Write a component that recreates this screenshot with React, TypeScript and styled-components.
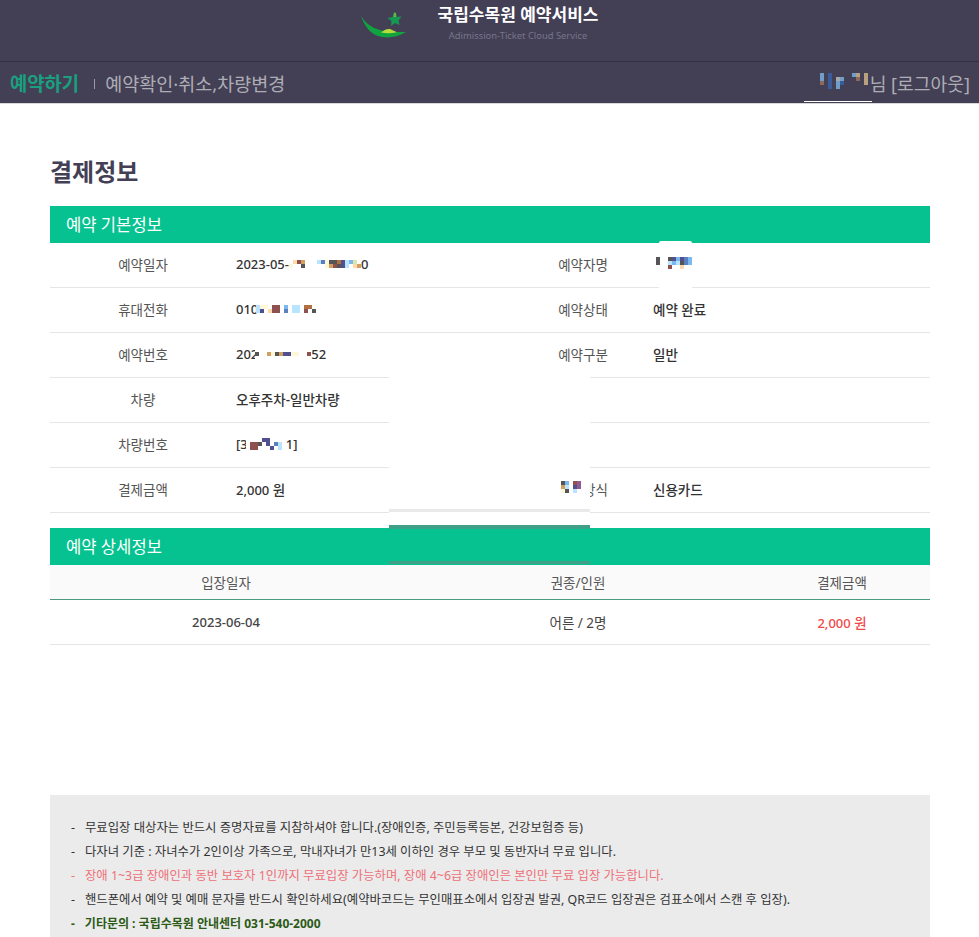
import React from "react";
import styled, { createGlobalStyle } from "styled-components";

const FONT = `"Noto Sans", "Noto Sans CJK KR", sans-serif`;

const Global = createGlobalStyle`
  html, body { margin: 0; padding: 0; background: #fff; }
  html { height: 937px; overflow: hidden; }
  body { font-family: ${FONT}; color: #333; }
  * { box-sizing: border-box; }
`;

const Page = styled.div`position: relative; width: 979px; height: 937px; overflow: hidden;`;
const Header = styled.header`
  height: 62px; background: #434056; border-bottom: 1px solid #33313f;
  display: flex; align-items: flex-start; padding-left: 360px; gap: 30px;
`;
const LogoWrap = styled.div`padding-top: 12px; height: 40px;`;
const Brand = styled.div`width: 160px; display: flex; flex-direction: column; align-items: center; padding-top: 3px;`;
const BrandTitle = styled.div`font-size: 17px; font-weight: 700; color: #fff; line-height: 24px; white-space: nowrap;`;
const BrandSub = styled.div`font-size: 9.4px; color: #77758a; line-height: 12px; margin-top: 3px; white-space: nowrap;`;

const Nav = styled.nav`
  height: 42px; background: #434056; border-bottom: 1px solid #d8d8d8;
  display: flex; align-items: center; padding: 0 9px 0 10px; position: relative;
`;
const NavActive = styled.a`font-size: 18.8px; font-weight: 700; color: #1a9f7f;`;
const NavSep = styled.span`width: 1px; height: 10px; background: #9a99a3; margin: 2px 10px 0 15px;`;
const NavLink = styled.a`font-size: 18.5px; color: #aeadb5;`;
const NavUser = styled.div`margin-left: auto; display: flex; align-items: center; font-size: 18.2px; color: #aeadb5; white-space: nowrap;`;
const NavMosaic = styled.div`display: flex; margin-bottom: 3px;`;
const NavUserText = styled.span`margin-left: 2px; padding-top: 1px;`;
const NavUnderline = styled.span`position: absolute; left: 804px; top: 39px; width: 68px; height: 1px; background: #fff;`;

const Main = styled.main`padding: 0 49px 0 50px;`;
const Title = styled.h1`font-size: 24px; font-weight: 700; color: #434056; margin: 0; padding-top: 50px; height: 102px; line-height: 36px;`;
const Bar = styled.div`height: 37px; background: #05c290; color: #fff; font-size: 16.6px; line-height: 37px; padding-left: 16px;`;

const InfoRow = styled.div`
  display: grid; grid-template-columns: 186px 280px 134px 1fr;
  height: 45px; border-bottom: 1px solid #e6e6e6; align-items: center; font-size: 13px;
`;
const Label = styled.div`text-align: center; color: #555; padding-bottom: 2px; font-size: 13.5px;`;
const Value = styled.div`display: flex; align-items: center; font-weight: 500; color: #333; padding-bottom: 2px; white-space: nowrap;`;
const RightValue = styled(Value)`padding-left: 3px;`;
const Hangul = styled.span`font-size: 13.5px;`;
const Spacer = styled.div`height: 15px;`;

const DetailHead = styled.div`
  display: grid; grid-template-columns: 40% 40% 20%; height: 35px; background: #fafafa;
  border-bottom: 1px solid #4d9a84; align-items: center; font-size: 13.5px; color: #555; text-align: center;
`;
const DetailRow = styled.div`
  display: grid; grid-template-columns: 40% 40% 20%; height: 45px;
  border-bottom: 1px solid #e6e6e6; align-items: center; font-size: 13.5px; text-align: center; color: #444;
`;
const DetailDate = styled.div`font-size: 13px; font-weight: 500; color: #444;`;
const DetailPrice = styled.div`font-size: 13px; font-weight: 500; color: #f04848;`;

const Notice = styled.ul`
  list-style: none; margin: 150px 0 0; padding: 21px 0 0 21px; background: #ebebeb; height: 150px;
`;
const NoticeItem = styled.li<{ $tone?: "red" | "strong" }>`
  display: flex; gap: 10px; height: 24px; line-height: 24px; white-space: nowrap;
  font-size: ${(p) => (p.$tone === "strong" ? "12px" : "12.37px")};
  color: ${(p) => (p.$tone === "red" ? "#ee7079" : p.$tone === "strong" ? "#2c5a17" : "#333")};
  font-weight: ${(p) => (p.$tone === "strong" ? 700 : 400)};
`;

/* Leftover patches of the anonymised screenshot: they lie over the table */
const WhitePatch = styled.div`position: absolute; left: 389px; top: 377px; width: 201px; height: 132px; background: #fff;`;
const GreyStrip = styled.div`position: absolute; left: 389px; top: 509px; width: 201px; height: 16px; background: #fff; border-top: 3px solid #e9e9e9;`;
const TealStrip = styled.div<{ $top: number; $h: number }>`position: absolute; left: 389px; top: ${(p) => p.$top}px; width: 201px; height: ${(p) => p.$h}px; background: #3f9f87;`;
const NamePatch = styled.div`position: absolute; left: 659px; top: 241px; width: 33px; height: 48px; background: #fff; border-radius: 2px 2px 0 0;`;
const FloatMosaic = styled.div<{ $x: number; $y: number }>`position: absolute; left: ${(p) => p.$x}px; top: ${(p) => p.$y}px; display: flex;`;

const PALETTE: Record<string, string> = {
  a: "#ffd9a8", b: "#8f5050", c: "#555555", d: "#b8e4ff", e: "#5a80c0", f: "#505090",
  g: "#fff8d8", h: "#d0a060", i: "#b07040", j: "#7ab8ee", k: "#d8e8b0", l: "#905a90", m: "#a8a8a8",
  n: "#3b5b9b", o: "#b8a080", p: "#6f9fc8", q: "#8c6a5a",
};

function Mosaic({ rows, cell = 4, overlap = 0 }: { rows: string[]; cell?: number; overlap?: number }) {
  const w = Math.max(...rows.map((r) => r.length)) * cell;
  const h = rows.length * cell;
  return (
    <svg width={w} height={h} viewBox={`0 0 ${w} ${h}`} style={overlap ? { marginLeft: -overlap, background: "#fff" } : undefined}>
      {rows.flatMap((r, y) =>
        r.split("").map((ch, x) =>
          PALETTE[ch] ? <rect key={`${x}-${y}`} x={x * cell} y={y * cell} width={cell} height={cell} fill={PALETTE[ch]} /> : null
        )
      )}
    </svg>
  );
}

function Logo() {
  return (
    <svg width="48" height="28" viewBox="0 0 48 28" aria-hidden="true">
      <path d="M1 4 C8 15 18 21 46 20 C36 26 26 26.5 18 24 C10 21.5 4 13 1 4 Z" fill="#10a440" />
      <path d="M21 20.5 C25 17.5 27 16.5 30 17 L37 20.2 C31 21.6 26 21.4 21 20.5 Z" fill="#b6dc3c" />
      <path d="M34 0.5 L36 1 L36.5 5 L41.5 4.5 L38.5 8.5 L39.5 13 L35 11 L31 14 L31.5 9 L27.5 6 L33 5 Z" fill="#149a50" />
      <path d="M34 0.5 L36 1 L36.3 5 L33.2 5 Z" fill="#5cb84a" />
    </svg>
  );
}

const info: [string, React.ReactNode, string?, React.ReactNode?][] = [
  ["예약일자", <>2023-05-<Mosaic rows={[".abh...degccifdjk.", "g..c.....ghbcfd.ah"]} />0</>, "예약자명", null],
  ["휴대전화", <>010<Mosaic overlap={2} rows={["dgg.bb.j.dd.ii..", "df.abb.e.dd.b.c."]} /></>, "예약상태", <Hangul>예약 완료</Hangul>],
  ["예약번호", <>202<Mosaic overlap={3} rows={["..............", "c..hgchffgg..b", ".............."]} />52</>, "예약구분", <Hangul>일반</Hangul>],
  ["차량", <Hangul>오후주차-일반차량</Hangul>],
  ["차량번호", <>[3<Mosaic overlap={2} rows={["....ff....", ".bbc.f.ed.", ".bb...f.d."]} />1]</>],
  ["결제금액", <span>2,000 <Hangul>원</Hangul></span>, "결제방식", <Hangul>신용카드</Hangul>],
];

const notices: { text: string; tone?: "red" | "strong" }[] = [
  { text: "무료입장 대상자는 반드시 증명자료를 지참하셔야 합니다.(장애인증, 주민등록등본, 건강보험증 등)" },
  { text: "다자녀 기준 : 자녀수가 2인이상 가족으로, 막내자녀가 만13세 이하인 경우 부모 및 동반자녀 무료 입니다." },
  { text: "장애 1~3급 장애인과 동반 보호자 1인까지 무료입장 가능하며, 장애 4~6급 장애인은 본인만 무료 입장 가능합니다.", tone: "red" },
  { text: "핸드폰에서 예약 및 예매 문자를 반드시 확인하세요(예약바코드는 무인매표소에서 입장권 발권, QR코드 입장권은 검표소에서 스캔 후 입장)." },
  { text: "기타문의 : 국립수목원 안내센터 031-540-2000", tone: "strong" },
];

export default function App() {
  return (
    <Page>
      <Global />
      <Header>
        <LogoWrap><Logo /></LogoWrap>
        <Brand>
          <BrandTitle>국립수목원 예약서비스</BrandTitle>
          <BrandSub>Adimission-Ticket Cloud Service</BrandSub>
        </Brand>
      </Header>
      <Nav>
        <NavActive>예약하기</NavActive>
        <NavSep />
        <NavLink>예약확인·취소,차량변경</NavLink>
        <NavUser>
          <NavMosaic>
            <Mosaic rows={["p.n.....po.o", "p.n.mp...q.o", "q.n.pn.....o", "..n.p......."]} />
          </NavMosaic>
          <NavUserText>님 [로그아웃]</NavUserText>
        </NavUser>
        <NavUnderline />
      </Nav>
      <Main>
        <Title>결제정보</Title>
        <Bar>예약 기본정보</Bar>
        {info.map(([l, v, rl, rv]) => (
          <InfoRow key={l}>
            <Label>{l}</Label>
            <Value>{v}</Value>
            <Label>{rl}</Label>
            <RightValue>{rv}</RightValue>
          </InfoRow>
        ))}
        <Spacer />
        <Bar>예약 상세정보</Bar>
        <DetailHead>
          <div>입장일자</div>
          <div>권종/인원</div>
          <div>결제금액</div>
        </DetailHead>
        <DetailRow>
          <DetailDate>2023-06-04</DetailDate>
          <div>어른 / 2명</div>
          <DetailPrice>2,000 <Hangul>원</Hangul></DetailPrice>
        </DetailRow>
        <Notice>
          {notices.map((n) => (
            <NoticeItem key={n.text} $tone={n.tone}>
              <span>-</span>
              <span>{n.text}</span>
            </NoticeItem>
          ))}
        </Notice>
      </Main>
      <WhitePatch />
      <GreyStrip />
      <TealStrip $top={525} $h={4} />
      <TealStrip $top={561} $h={3} />
      <NamePatch />
      <FloatMosaic $x={656} $y={257}>
        <Mosaic rows={["c..cfjfej", "c..djdcej", "...b..a.."]} />
      </FloatMosaic>
      <FloatMosaic $x={561} $y={481}>
        <Mosaic rows={["cj.bl.", "hd.fl.", "gc.d.."]} />
      </FloatMosaic>
    </Page>
  );
}
